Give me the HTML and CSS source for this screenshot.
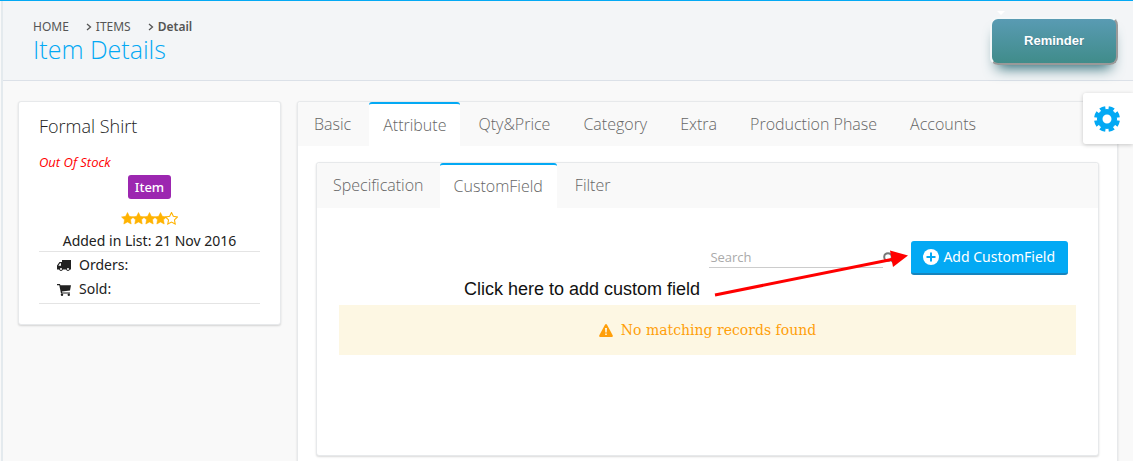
FILE: index.html
```html
<!DOCTYPE html>
<html lang="en">
<head>
<meta charset="utf-8">
<title>Item Details</title>
<link rel="stylesheet" href="styles.css">
</head>
<body>
<svg class="sprite" width="0" height="0" aria-hidden="true">
  <symbol id="star" viewBox="0 0 24 24"><path d="M12 1l3.400 7 7.600 1.100-5.500 5.400 1.300 7.700L12 18.500l-6.800 3.700 1.300-7.700L1 9.100 8.600 8z"/></symbol>
</svg>
<div class="page">
  <header class="page-head">
    <div>
      <nav class="crumbs" aria-label="Breadcrumb">
        <a href="#">HOME</a>
        <svg class="chevron" viewBox="0 0 6 8"><path d="M1 1l3.500 3L1 7"/></svg>
        <a href="#">ITEMS</a>
        <svg class="chevron" viewBox="0 0 6 8"><path d="M1 1l3.500 3L1 7"/></svg>
        <span class="current">Detail</span>
      </nav>
      <h1>Item Details</h1>
    </div>
    <button class="reminder" type="button">Reminder</button>
  </header>

  <button class="settings" type="button" aria-label="Settings">
    <svg viewBox="0 0 26 26"><circle class="gear-body" cx="13" cy="13" r="7.300"/><circle class="gear-teeth" cx="13" cy="13" r="11" pathLength="80"/></svg>
  </button>

  <main class="content">
    <aside class="card item-card">
      <h2>Formal Shirt</h2>
      <p class="stock">Out Of Stock</p>
      <p class="center"><span class="label">Item</span></p>
      <div class="stars" role="img" aria-label="4 of 5 stars">
        <svg><use href="#star"/></svg><svg><use href="#star"/></svg><svg><use href="#star"/></svg><svg><use href="#star"/></svg><svg class="empty"><use href="#star"/></svg>
      </div>
      <p class="center added">Added in List: 21 Nov 2016</p>
      <ul class="stats">
        <li><svg viewBox="0 0 14 12"><path fill-rule="evenodd" d="M5 0h9v9.500h-1.100a2 2 0 0 1-3.800 0H5.900a2 2 0 0 1-3.800 0H0V5.500L2.500 2H5zM3 3.200L1.300 5.700H4V3.200zM4 8a1 1 0 1 0 0 2 1 1 0 0 0 0-2zm7 0a1 1 0 1 0 0 2 1 1 0 0 0 0-2z"/></svg>Orders:</li>
        <li><svg viewBox="0 0 14 12"><path d="M0 0h3l.4 1.200H14L13 6.500 5 7.400l.2 1H13v1H4L2.300 1.200H0z"/><circle cx="5" cy="10.800" r="1.200"/><circle cx="11.800" cy="10.800" r="1.200"/></svg>Sold:</li>
      </ul>
    </aside>

    <section class="card outer">
      <nav class="tabs" aria-label="Item sections">
        <a href="#">Basic</a>
        <a href="#" class="active" aria-current="page">Attribute</a>
        <a href="#">Qty&amp;Price</a>
        <a href="#">Category</a>
        <a href="#">Extra</a>
        <a href="#">Production Phase</a>
        <a href="#">Accounts</a>
      </nav>
      <div class="outer-body">
        <section class="card inner">
          <nav class="tabs inner-tabs" aria-label="Attribute sections">
            <a href="#">Specification</a>
            <a href="#" class="active" aria-current="page">CustomField</a>
            <a href="#">Filter</a>
          </nav>
          <div class="inner-body">
            <div class="toolbar">
              <div class="search">
                <input type="text" placeholder="Search" aria-label="Search">
                <svg viewBox="0 0 12 12"><circle cx="5" cy="5" r="3.800"/><path d="M8 8l3 3"/></svg>
              </div>
              <button class="add" type="button">
                <svg viewBox="0 0 16 16"><circle cx="8" cy="8" r="8"/><path d="M8 3.500v9M3.500 8h9"/></svg>Add CustomField
              </button>
              <div class="hint">
                <span>Click here to add custom field</span>
                <svg viewBox="0 0 196 50"><path class="line" d="M3 46L182 10"/><path class="tip" d="M196 6.500L178 1.500 181 18z"/></svg>
              </div>
            </div>
            <div class="notice" role="status">
              <svg viewBox="0 0 14 13"><path fill-rule="evenodd" d="M6.100.5Q7-.5 7.900.5L13.800 11.500Q14 13 12.900 13H1.100Q0 13 .2 11.500zM6 4l.3 4.500h1.400L8 4zm.2 5.500V11h1.600V9.500z"/></svg>
              No matching records found
            </div>
          </div>
        </section>
      </div>
    </section>
  </main>
</div>
</body>
</html>
```
FILE: styles.css
```css
* { box-sizing: border-box; }
body {
  margin: 0;
  background: #f9f9f9;
  color: #212121;
  font: 14px/20px "Noto Sans", "Open Sans", sans-serif;
}
h1, h2, p, ul { margin: 0; padding: 0; font-weight: 400; }
a { color: inherit; text-decoration: none; }
button { font: inherit; border: 0; cursor: pointer; }
.sprite { position: absolute; }
.page {
  height: 100vh;
  overflow: hidden;
  border-top: 1px solid #03a9f4;
  box-shadow: inset 1px 0 #f9f9f9, inset 3px 0 #e4eaee;
}
.page-head {
  display: flex;
  justify-content: space-between;
  align-items: flex-start;
  margin-left: 3px;
  padding: 16px 15px 15px 30px;
  border-bottom: 1px solid #dce1e8;
  background: #f3f5f7;
}
.crumbs {
  display: flex;
  align-items: center;
  height: 20px;
  color: #555;
  font-size: 12px;
}
.chevron {
  width: 6px;
  height: 8px;
  margin: 0 4px 0 17px;
  fill: none;
  stroke: #555;
  stroke-width: 1.3;
}
.current { font-weight: 600; }
h1 {
  margin-bottom: 2px;
  color: #03a9f4;
  font: 300 25px/24px "Open Sans", sans-serif;
}
.reminder {
  position: relative;
  width: 128px;
  height: 48px;
  border: 2px solid;
  border-color: #f4f8f9 #999 #999 #f4f8f9;
  border-radius: 8px;
  background: linear-gradient(#599bb3, #408c8a);
  box-shadow: 0 10px 14px -7px #276873;
  color: #fff;
  font: bold 13px/20px "Liberation Sans", sans-serif;
  text-shadow: 0 1px 0 #3d768a;
}
.reminder::before {
  content: "";
  position: absolute;
  top: -8px;
  left: 5px;
  border: 4px solid transparent;
  border-top-color: #fff;
  border-bottom-width: 0;
}
.settings {
  position: fixed;
  top: 93px;
  right: 0;
  z-index: 2;
  width: 50px;
  height: 51px;
  padding: 12px 14px 12px 11px;
  border-radius: 3px 0 0 3px;
  background: #fff;
  box-shadow: 0 1px 4px rgba(0, 0, 0, .2);
}
.settings svg { display: block; width: 26px; height: 26px; fill: none; stroke: #03a9f4; }
.gear-body { stroke-width: 5.6; }
.gear-teeth { stroke-width: 4; stroke-dasharray: 6.2 3.8; stroke-dashoffset: -1.9; }
.content {
  display: flex;
  align-items: flex-start;
  gap: 16px;
  padding: 20px 15px 20px 18px;
}
.card {
  border: 1px solid #e7e9eb;
  border-radius: 3px;
  background: #fff;
  box-shadow: 0 1px 2px rgba(0, 0, 0, .15);
}
.item-card { flex: 0 0 263px; padding: 14px 20px 20px; }
h2 { font: 300 18px/20px "Open Sans", sans-serif; }
.stock {
  margin-top: 16px;
  color: #f00;
  font: italic 400 13px/20px "Open Sans", sans-serif;
}
.center { text-align: center; }
.label {
  display: inline-block;
  margin-top: 3px;
  padding: 0 7px;
  border-radius: 3px;
  background: #9c27b0;
  color: #fff;
  font-size: 13px;
  font-weight: 500;
  line-height: 24px;
}
.stars { display: flex; justify-content: center; margin-top: 13px; }
.stars svg { width: 13px; height: 13px; margin: 0 -1px; overflow: visible; fill: #ffb300; stroke: #ffb300; stroke-width: 1; }
.stars .empty { fill: none; stroke-width: 2; }
.added { margin-top: 6px; }
.stats {
  padding: 1px 0 2px;
  border-top: 1px solid #e4e4e4;
  border-bottom: 1px solid #e4e4e4;
  list-style: none;
}
.stats li { display: flex; align-items: center; gap: 8px; height: 24px; padding-left: 18px; }
.stats svg { width: 14px; height: 12px; margin-top: 2px; fill: #212121; }
.outer { flex: 1; min-width: 0; }
.tabs {
  display: flex;
  height: 44px;
  border-radius: 3px 3px 0 0;
  background: #f9f9f9;
  color: #666;
  font: 300 16px/44px "Open Sans", sans-serif;
}
.inner-tabs { height: 45px; }
.tabs a { padding: 0 16px 0 17px; }
.tabs a:first-child { padding: 0 18px 0 16px; }
.inner-tabs a:first-child { padding-right: 16px; }
.tabs .active {
  padding: 0 14px;
  border-top: 2px solid #03a9f4;
  border-radius: 3px 3px 0 0;
  background: #fff;
  line-height: 42px;
}
.tabs .active + a { padding-left: 18px; }
.outer-body { padding: 16px 18px; }
.inner { min-height: 294px; }
.inner-body { padding: 33px 22px 20px; }
.toolbar { position: relative; display: flex; justify-content: flex-end; gap: 16px; margin-right: 8px; }
.search { display: flex; align-items: flex-start; width: 186px; height: 27px; }
.search input {
  width: 174px;
  height: 27px;
  padding: 6px 1px 0;
  border: 0;
  border-bottom: 1px solid #ccc;
  background: none;
  color: #555;
  font: 13px/20px "Open Sans", sans-serif;
}
.search input::placeholder { color: #aaa; opacity: 1; }
.search svg { flex: 0 0 12px; height: 12px; margin-top: 11px; fill: none; stroke: #777; stroke-width: 2; }
.add {
  display: flex;
  align-items: center;
  gap: 4px;
  height: 34px;
  padding: 0 13px 0 12px;
  border-bottom: 2px solid #1684bd;
  border-radius: 3px;
  background: #03a9f4;
  color: #fff;
}
.add svg { width: 16px; height: 16px; fill: #fff; }
.add path { stroke: #03a9f4; stroke-width: 2; }
.hint {
  position: absolute;
  top: 8px;
  right: 160px;
  display: flex;
  align-items: flex-end;
  gap: 12px;
  color: #111;
  font: 18px/20px "Liberation Sans", sans-serif;
  white-space: nowrap;
  pointer-events: none;
}
.hint svg { width: 196px; height: 50px; }
.line { stroke: #f00; stroke-width: 3; }
.tip { fill: #f00; }
.notice {
  display: flex;
  align-items: center;
  justify-content: center;
  gap: 8px;
  height: 50px;
  margin-top: 30px;
  background: #fdf7e3;
  color: #ff9f0a;
  font: 14px/20px "DejaVu Serif", serif;
}
.notice svg { width: 14px; height: 13px; fill: #ff9f0a; }
```
